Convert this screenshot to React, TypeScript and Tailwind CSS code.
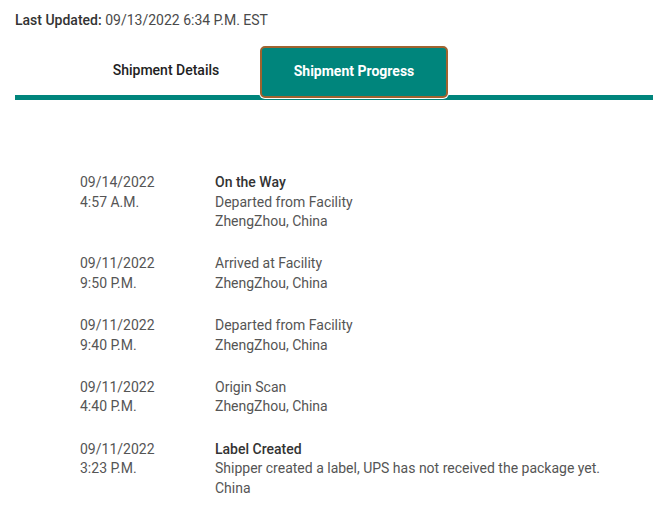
import React from "react";

const rows = [
  { date: "09/14/2022", time: "4:57 A.M.", title: "On the Way", lines: ["Departed from Facility", "ZhengZhou, China"], bold: true },
  { date: "09/11/2022", time: "9:50 P.M.", title: "Arrived at Facility", lines: ["ZhengZhou, China"], bold: false },
  { date: "09/11/2022", time: "9:40 P.M.", title: "Departed from Facility", lines: ["ZhengZhou, China"], bold: false },
  { date: "09/11/2022", time: "4:40 P.M.", title: "Origin Scan", lines: ["ZhengZhou, China"], bold: false },
  { date: "09/11/2022", time: "3:23 P.M.", title: "Label Created", lines: ["Shipper created a label, UPS has not received the package yet.", "China"], bold: true },
];

export default function App() {
  return (
    <div className="w-[653px] h-[527px] bg-white overflow-hidden text-[14px] text-[#4a4a4a]" style={{ fontFamily: "Roboto, 'Liberation Sans', sans-serif" }}>
      <div className="pl-[15px] pt-[10px] leading-[20px]">
        <span className="font-medium text-[#333]">Last Updated:</span> <span>09/13/2022 6:34 P.M. EST</span>
      </div>
      <div className="ml-[15px] mt-[16px] relative">
        <div className="flex pl-[57px] relative z-10">
          <div className="w-[188px] h-[52px] flex items-center justify-center font-medium text-[#222] pb-[4px]">Shipment Details</div>
          <div className="w-[188px] h-[52px] flex items-center justify-center bg-[#00857c] border-2 border-[#a0632f] rounded-[5px] ring-1 ring-white text-white font-bold pb-[1px]">
            Shipment Progress
          </div>
        </div>
        <div className="h-[5px] bg-[#00857c] -mt-[3px]" />
      </div>
      <div className="pl-[80px] pt-[73px] leading-[19.5px]">
        {rows.map((r, i) => (
          <div key={i} className="flex mb-[22.75px]">
            <div className="w-[135px] text-[#555]">
              <div>{r.date}</div>
              <div>{r.time}</div>
            </div>
            <div className="text-[#555]">
              <div className={r.bold ? "font-medium text-[#333]" : ""}>{r.title}</div>
              {r.lines.map((l, j) => (
                <div key={j}>{l}</div>
              ))}
            </div>
          </div>
        ))}
      </div>
    </div>
  );
}
